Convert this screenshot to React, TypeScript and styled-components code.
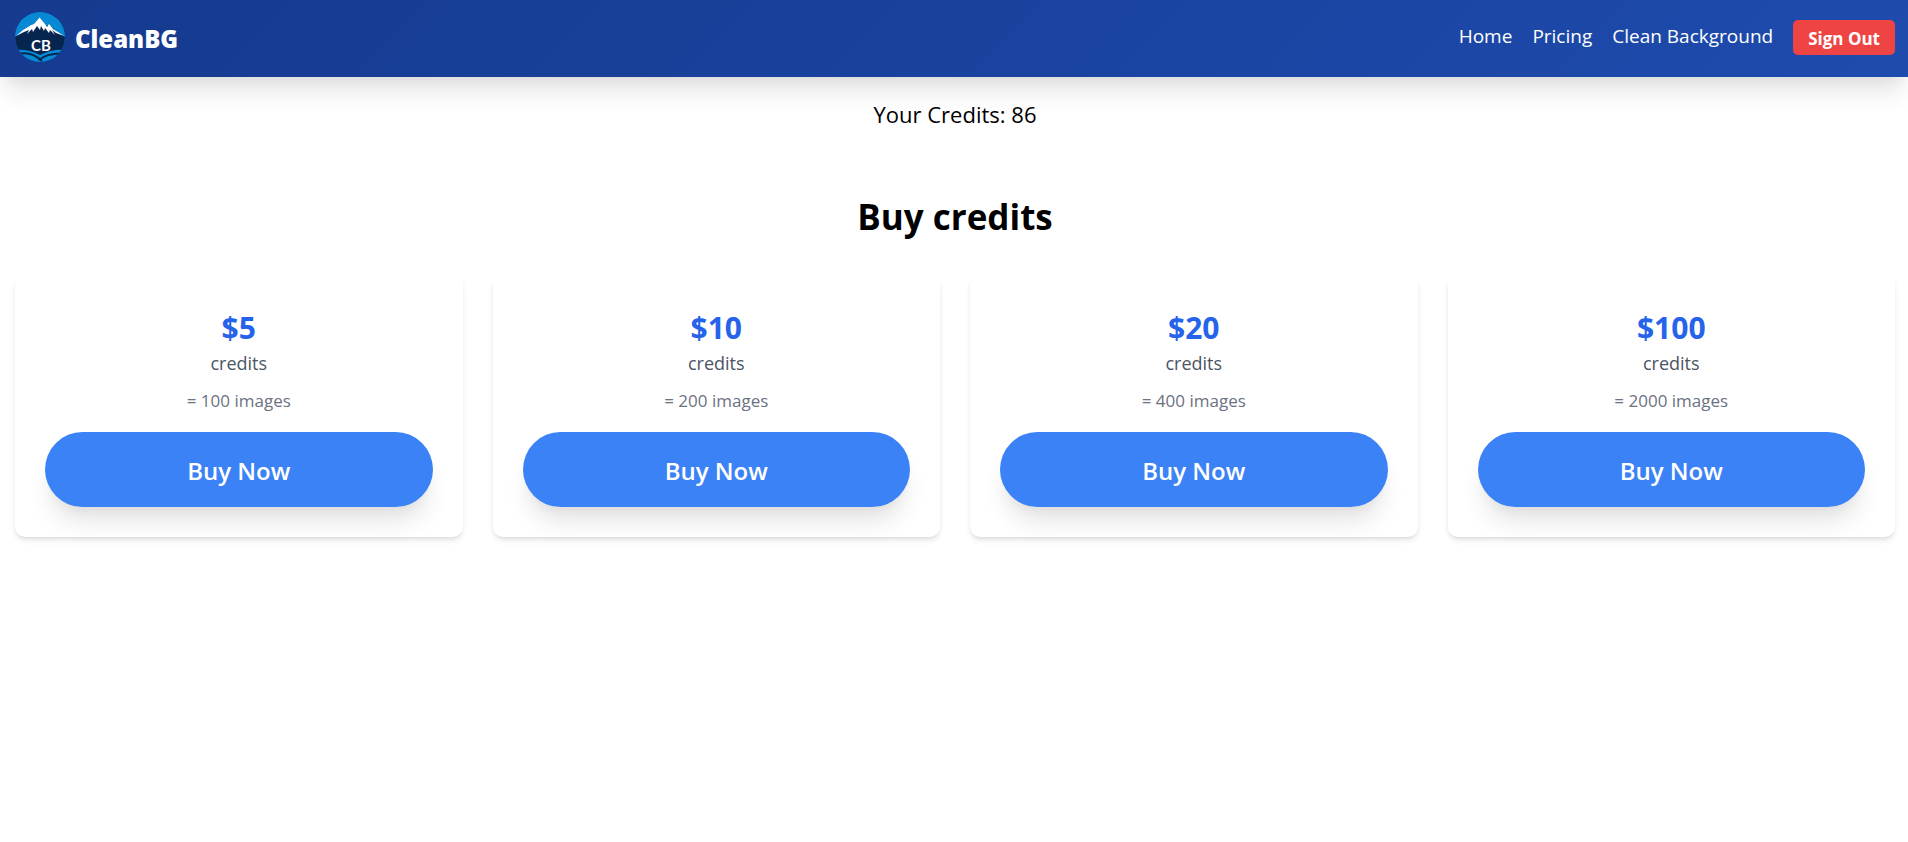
import React from "react";
import styled, { createGlobalStyle } from "styled-components";

const GlobalStyle = createGlobalStyle`
  *, *::before, *::after { box-sizing: border-box; }
  body {
    margin: 0;
    background: #fff;
    color: #000;
    font-family: "Open Sans", "Noto Sans", sans-serif;
    font-size: 18px;
    line-height: 28px;
  }
  h1, h2, p, ul { margin: 0; padding: 0; }
`;

const Header = styled.header`
  display: flex;
  align-items: center;
  justify-content: space-between;
  padding: 12px 13px 15px 15px;
  background: linear-gradient(135deg, #153a8e, #1e4bae);
  box-shadow: 0 20px 25px -5px rgba(0, 0, 0, 0.1), 0 10px 10px -5px rgba(0, 0, 0, 0.04);
`;

const Brand = styled.a`
  display: flex;
  align-items: center;
  gap: 10px;
  color: #fff;
  font-size: 24px;
  font-weight: 800;
  line-height: 36px;
  text-decoration: none;
`;

const BrandName = styled.span`
  padding-top: 4px;
`;

const Logo = styled.svg`
  display: block;
  width: 50px;
  height: 50px;
`;

const Nav = styled.nav`
  display: flex;
  align-items: center;
  gap: 20px;
`;

const NavLink = styled.a`
  padding-bottom: 3px;
  color: #fff;
  font-size: 19px;
  line-height: 28px;
  text-decoration: none;
`;

const SignOut = styled.button`
  height: 35px;
  padding: 3px 15px 0;
  border: 0;
  border-radius: 5px;
  background: #ef4444;
  color: #fff;
  font: inherit;
  font-size: 17px;
  font-weight: 700;
  cursor: pointer;
`;

const Main = styled.main`
  padding: 23px 13px 30px 15px;
  text-align: center;
`;

const Balance = styled.p`
  font-size: 22px;
  font-weight: 500;
  line-height: 28px;
`;

const Title = styled.h1`
  margin-top: 67px;
  font-size: 35px;
  font-weight: 700;
  line-height: 44px;
`;

const Plans = styled.section`
  display: grid;
  grid-template-columns: repeat(4, minmax(0, 1fr));
  gap: 30px;
  margin-top: 36px;
`;

const Card = styled.article`
  padding: 35px 30px 30px;
  border-radius: 10px;
  background: #fff;
  box-shadow: 0 4px 6px -1px rgba(0, 0, 0, 0.1), 0 2px 4px -2px rgba(0, 0, 0, 0.1);
`;

const Price = styled.h2`
  color: #2563eb;
  font-size: 30px;
  font-weight: 700;
  line-height: 36px;
`;

const Unit = styled.p`
  color: #4b5563;
  font-size: 18px;
  line-height: 34px;
`;

const Amount = styled.p`
  margin-top: 8px;
  color: #6b7280;
  font-size: 17px;
  line-height: 26px;
`;

const BuyButton = styled.button`
  display: block;
  width: 100%;
  height: 75px;
  margin-top: 18px;
  padding: 2px 0 0;
  border: 0;
  border-radius: 38px;
  background: #3b82f6;
  color: #fff;
  font: inherit;
  font-size: 24px;
  font-weight: 600;
  box-shadow: 0 20px 25px -5px rgba(0, 0, 0, 0.1), 0 10px 10px -5px rgba(0, 0, 0, 0.04);
  cursor: pointer;
`;

const LogoText = styled.text`
  fill: #fff;
  font-family: Lato, sans-serif;
  font-size: 15px;
  font-weight: 700;
`;

const links = ["Home", "Pricing", "Clean Background"];

const plans = [
  { price: 5, images: 100 },
  { price: 10, images: 200 },
  { price: 20, images: 400 },
  { price: 100, images: 2000 },
];

function BrandLogo() {
  return (
    <Logo viewBox="0 0 50 50" aria-hidden="true">
      <defs>
        <clipPath id="disc">
          <circle cx="25" cy="25" r="25" />
        </clipPath>
      </defs>
      <g clipPath="url(#disc)">
        <rect width="50" height="50" fill="#0789d4" />
        <path d="M0 25 8 19 16 13 19 12 24 6 31 14 34 13 41 19 50 25V38Q37 37 25 43Q14 37 0 38Z" fill="#06264f" />
        <path
          d="M1 24 8 18 13 15 16 13 19 12 24.500 5.500 30 12 32 15 34 12 38 17 43 20 49 24 41 21 37 18 40 23 35 18 34 21 30 16 29 19 26 14 25 18 22 14 18 20 17 17 12 22 14 18 9 20Z"
          fill="#fff"
        />
        <path d="M4 42Q16 39 27 49" fill="none" stroke="#06264f" strokeWidth="2" />
        <path d="M24 48Q32 41 48 41.500" fill="none" stroke="#06264f" strokeWidth="2" />
      </g>
      <LogoText x="26" y="39" textAnchor="middle">CB</LogoText>
    </Logo>
  );
}

export default function App() {
  return (
    <>
      <GlobalStyle />
      <Header>
        <Brand href="#">
          <BrandLogo />
          <BrandName>CleanBG</BrandName>
        </Brand>
        <Nav>
          {links.map((label) => (
            <NavLink key={label} href="#">{label}</NavLink>
          ))}
          <SignOut type="button">Sign Out</SignOut>
        </Nav>
      </Header>
      <Main>
        <Balance>Your Credits: 86</Balance>
        <Title>Buy credits</Title>
        <Plans>
          {plans.map(({ price, images }) => (
            <Card key={price}>
              <Price>${price}</Price>
              <Unit>credits</Unit>
              <Amount>= {images} images</Amount>
              <BuyButton type="button">Buy Now</BuyButton>
            </Card>
          ))}
        </Plans>
      </Main>
    </>
  );
}
